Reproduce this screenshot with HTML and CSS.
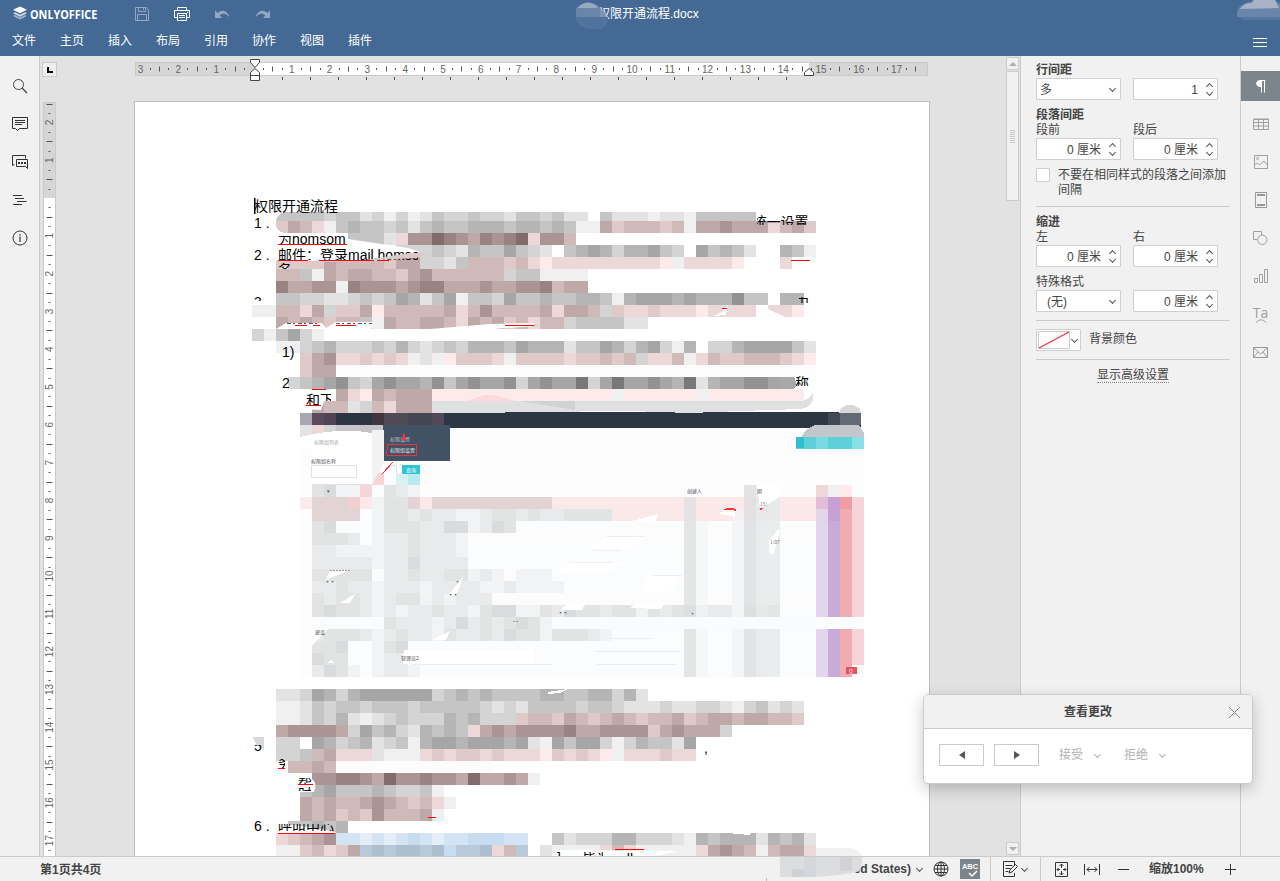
FILE: index.html
```html
<!DOCTYPE html>
<html lang="zh-CN">
<head>
<meta charset="utf-8">
<title>权限开通流程.docx</title>
<link rel="stylesheet" href="styles.css">
</head>
<body>
<div class="app">
  <header class="header">
    <div class="title-row">
      <div class="logo">
        <svg width="16" height="16" viewBox="0 0 16 16"><path d="M1 10l2-1 5 2.4L13 9l2 1-7 3.600z" fill="#9fb4cf"/><path d="M1 7.300l2-1 5 2.400 5-2.400 2 1L8 10.700z" fill="#d3deea"/><path d="M8 .500l7 3.300L8 7.200 1 3.800z" fill="#fff"/></svg>
        <span>ONLYOFFICE</span>
      </div>
      <div class="quick">
        <svg class="dim" width="14" height="14" viewBox="0 0 14 14"><path d="M.500.500h11l2 2v11H.500zM3.500.500v4h7v-4M8.500 1v2M2.500 13V7.500h9V13" fill="none" stroke="#fff"/></svg>
        <svg width="16" height="14" viewBox="0 0 16 14"><path d="M3.500 3.500v-3h9v3M3.500 10.500h-3v-7h15v7h-3M3.500 6.500h9v7h-9zM5 8.500h6M5 10.500h6M13 5.500h1" fill="none" stroke="#fff"/></svg>
        <svg class="dim" width="15" height="9" viewBox="0 0 15 9"><path d="M0 .500v7.500h7L4.500 5.300C8 2.500 12 3.500 14.500 7.500 13 .800 7-1.200 2.600 3z" fill="#fff"/></svg>
        <svg class="dim" width="15" height="9" viewBox="0 0 15 9"><path d="M15 .500v7.500H8l2.500-2.700C7 2.500 3 3.500.500 7.500 2 .800 8-1.200 12.400 3z" fill="#fff"/></svg>
      </div>
      <div class="doc-name">权限开通流程.docx</div>
      <svg class="veil" width="1280" height="56"><g id="headVeil"></g></svg>
    </div>
    <nav class="tabs"><span>文件</span><span>主页</span><span>插入</span><span>布局</span><span>引用</span><span>协作</span><span>视图</span><span>插件</span>
      <svg class="burger" width="14" height="9"><path d="M0 .500h14M0 4.500h14M0 8.500h14" stroke="#fff"/></svg></nav>
  </header>

  <main class="main">
    <aside class="rail left">
      <i><svg width="16" height="16" viewBox="0 0 16 16"><circle cx="6.500" cy="6.500" r="5" fill="none" stroke="#444"/><path d="M10 10l5 5" stroke="#444" stroke-width="1.300"/></svg></i>
      <i><svg width="16" height="16" viewBox="0 0 16 16"><path d="M.500 1.500h15v11h-8l-2 2-2-2h-3z" fill="none" stroke="#333"/><path d="M3 4.500h10M3 6.500h10M3 8.500h7" stroke="#333"/></svg></i>
      <i><svg width="16" height="16" viewBox="0 0 16 16"><path d="M2.500 10.500l-2 1v-10h13v3M4.500 5.500h11v9l-2-2h-9z" fill="none" stroke="#333"/><path d="M6 8h2v2H6zM9 8h2v2H9zM12 8h2v2h-2z" fill="#333"/></svg></i>
      <i><svg width="14" height="12" viewBox="0 0 14 12"><path d="M0 1.500h9M2 4.500h9M4 7.500h9.500M0 10.500h9" stroke="#333"/></svg></i>
      <i><svg width="16" height="16" viewBox="0 0 16 16"><circle cx="8" cy="8" r="7" fill="none" stroke="#333"/><path d="M8 4v1.500M8 6.500V12" stroke="#333" stroke-width="1.200"/></svg></i>
    </aside>

    <section class="editor">
      <svg class="canvas" id="canvas" width="980" height="800" viewBox="40 56 980 800">
        <rect x="134.500" y="101.500" width="795" height="780" fill="#fff" stroke="#bbbec2"/>
        <g id="rulers"></g>
        <g id="mosaic" shape-rendering="crispEdges"></g>
        <g class="doc">
          <rect x="254" y="198" width="1.500" height="16"/>
          <text x="254" y="211">权限开通流程</text>
          <text x="254" y="227.500">1 .</text>
          <text x="254" y="259.500">2 .</text>
          <path d="M276 233h52l20 6 60 9 12 4-40 9H278z" fill="#fff"/>
          <svg x="276" y="236" width="75" height="9" viewBox="276 236 75 9"><text x="278" y="243.500">为homsom</text></svg>
          <svg x="276" y="245" width="142" height="15" viewBox="276 245 142 15"><text x="278" y="259.500">邮件：登录mail.homso</text></svg>
          <path d="M276 270q20-10 60-8l80-4 14-5h-20l-50 8h-84z" fill="#dcc8c7"/>
          <path class="redline" d="M278 244.500h69M278 260.500h30M319 260.500h55M377 260.500h12"/>
          <svg x="278" y="263" width="12" height="6" viewBox="278 263 12 6"><text x="278" y="274">名</text></svg>
          <svg x="757" y="215" width="56" height="10" viewBox="757 215 56 10"><text x="752.500" y="226.500">统一设置</text></svg>
          <path class="redline" d="M791 260.500h19M722 308.500h5"/>
          <svg x="254" y="295" width="8" height="6" viewBox="254 295 8 6"><text x="254" y="307">3</text></svg>
          <svg x="799" y="297" width="10" height="6" viewBox="799 297 10 6"><text x="795" y="307">中</text></svg>
          <path d="M276 329l10-6h36l4 5 10-6h38l-3 7zM430 329l60-5 44-1v3l-40 3z" fill="#fff"/>
          <path class="redline" d="M295 325.500h12M313 325.500h7M336 325.500h20M505 325.500h29"/>
          <path d="M287 323.500h33M336 323.500h36" stroke="#555" stroke-dasharray="4 2 2 3"/>
          <text x="282" y="357">1)</text>
          <svg x="282" y="375" width="7" height="13" viewBox="282 375 7 13"><text x="282" y="388">2)</text></svg>
          <path d="M301 409l8-18 27-1-12 12-3 8z" fill="#fff"/>
          <svg x="306" y="391" width="15" height="14" viewBox="306 391 15 14"><text x="306" y="405">和</text></svg>
          <svg x="320" y="391" width="11" height="10" viewBox="320 391 11 10"><text x="320" y="405">下</text></svg>
          <path class="redline" d="M312 389.500h14M306 405.500h15"/>
          <svg x="796" y="376" width="13" height="10" viewBox="796 376 13 10"><text x="795" y="387.500">称</text></svg>
          <svg x="254" y="745" width="9" height="7" viewBox="254 745 9 7"><text x="254" y="751">5</text></svg>
          <svg x="278" y="759" width="7" height="9" viewBox="278 759 7 9"><text x="278" y="768">务</text></svg>
          <path d="M286 778h24q8 3 4 14h-14z" fill="#fff"/>
          <svg x="298" y="778" width="14" height="6" viewBox="298 778 14 6"><text x="298" y="787">帮</text></svg>
          <svg x="298" y="787" width="13" height="4" viewBox="298 787 13 4"><text x="298" y="799">时</text></svg>
          <path class="redline" d="M278 768.500h7M298 784.500h15M428 817.500h8"/>
          <text x="704" y="753">,</text>
          <text x="254" y="831">6 .</text>
          <path d="M277 833v-10l30 4 20 3 10 3z" fill="#fff"/>
          <svg x="278" y="824" width="57" height="7" viewBox="278 824 57 7"><text x="278" y="832">呼叫中心</text></svg>
          <path class="redline" d="M278 833.500h57"/>
          <path d="M552 856l8-6 118 1-22 5z" fill="#fff"/>
          <text x="557" y="863">]</text><text x="582" y="864">皆为</text><text x="619" y="864">all</text>
          <path class="redline" d="M615 849.500h29"/>
        </g>
      </svg>
      <div class="scroll"><b class="up"></b><div class="thumb"><span></span></div><b class="down"></b></div>
    </section>

    <aside class="panel">
      <div class="lbl bold">行间距</div>
      <div class="pair"><div class="box combo"><span>多</span><em class="dn"></em></div><div class="box spin"><span>1</span><em></em></div></div>
      <div class="lbl bold sec">段落间距</div>
      <div class="pair lbl"><span>段前</span><span>段后</span></div>
      <div class="pair"><div class="box spin"><span>0 厘米</span><em></em></div><div class="box spin"><span>0 厘米</span><em></em></div></div>
      <div class="check"><i></i><span>不要在相同样式的段落之间添加间隔</span></div>
      <hr>
      <div class="lbl bold sec">缩进</div>
      <div class="pair lbl"><span>左</span><span>右</span></div>
      <div class="pair"><div class="box spin"><span>0 厘米</span><em></em></div><div class="box spin"><span>0 厘米</span><em></em></div></div>
      <div class="lbl sec">特殊格式</div>
      <div class="pair"><div class="box combo"><span class="none">(无)</span><em class="dn"></em></div><div class="box spin"><span>0 厘米</span><em></em></div></div>
      <hr>
      <div class="color"><div class="box swatch"><svg width="32" height="18"><path d="M.500.500h31v17H.500z" fill="#fff" stroke="#ccc"/><path d="M1 17L31 1" stroke="#f33" stroke-width="1.300"/></svg><em class="dn"></em></div><span>背景颜色</span></div>
      <hr>
      <div class="more"><span>显示高级设置</span></div>
    </aside>

    <aside class="rail right">
      <i class="on"><svg width="10" height="13" viewBox="0 0 10 13"><path d="M4 .500h5.500M5.500 0v12.500M8.500 0v12.500" stroke="#fff" fill="none"/><path d="M5 0v7C-1.500 7-1.500 0 5 0z" fill="#fff"/></svg></i>
      <i><svg width="16" height="12" viewBox="0 0 16 12"><path d="M.500 1h15v10.500H.500zM0 4.500h16M0 8h16M5.500 1v10M10.500 1v10M0 1.500h16" fill="none" stroke="#a0a0a0"/></svg></i>
      <i><svg width="14" height="14" viewBox="0 0 14 14"><path d="M.500.500h13v13H.500zM.500 10l3-2 2 2 4.500-4 3.500 4" fill="none" stroke="#a0a0a0"/><circle cx="3.500" cy="3.500" r="1" fill="none" stroke="#a0a0a0"/></svg></i>
      <i><svg width="12" height="16" viewBox="0 0 12 16"><path d="M.500.500h11v15H.500z" fill="none" stroke="#999"/><path d="M2 3h8M2 13h8" stroke="#999" stroke-width="2"/></svg></i>
      <i><svg width="15" height="14" viewBox="0 0 15 14"><path d="M4 8.500H.500v-8h8V4" fill="none" stroke="#a0a0a0"/><circle cx="9.300" cy="8.800" r="4.700" fill="none" stroke="#a0a0a0"/></svg></i>
      <i><svg width="14" height="14" viewBox="0 0 14 14"><path d="M.500 9.500h3v4h-3zM5.500 5.500h3v8h-3zM10.500.500h3v13h-3z" fill="none" stroke="#a0a0a0"/></svg></i>
      <i class="ta"><span>Ta</span><svg width="12" height="4"><path d="M.500 4Q6-2.500 11.500 4" fill="none" stroke="#a0a0a0"/></svg></i>
      <i><svg width="15" height="11" viewBox="0 0 15 11"><path d="M.500.500h14v10H.500zM1 1l6.500 6L14 1M1 10l4-5M14 10l-4-5" fill="none" stroke="#999"/></svg></i>
    </aside>
  </main>

  <footer class="status">
    <span class="pages">第1页共4页</span>
    <div class="tools">
      <span class="lang">ed States)</span><em class="dn"></em>
      <svg class="globe" width="16" height="16" viewBox="0 0 16 16"><g fill="none" stroke="#333"><circle cx="8" cy="8" r="7"/><ellipse cx="8" cy="8" rx="3.500" ry="7"/><path d="M8 1v14M1 8h14M2 4.500h12M2 11.500h12"/></g></svg>
      <div class="spell"><span>ABC</span><svg width="12" height="8"><path d="M3 3l3 3 5-5" fill="none" stroke="#fff" stroke-width="1.500"/></svg></div>
      <u></u>
      <svg class="track" width="15" height="16" viewBox="0 0 15 16"><path d="M11.500 4V.500H.500v15h11V12M2.500 4.500h7M2.500 7.500h5M2.500 10.500h3" fill="none" stroke="#333"/><path d="M6 12l1-3 5.500-5.500 2 2L9 11z" fill="#f1f1f1" stroke="#333"/></svg><em class="dn t"></em>
      <u></u>
      <svg class="fit" width="14" height="15" viewBox="0 0 14 15"><path d="M.500.500h12v14H.500zM6.500 2v4M6.500 9v4M2 7.500h3M8 7.500h3M4.500 4l2-2 2 2M4.500 11l2 2 2-2M3.500 6L2 7.500 3.500 9M9.500 6L11 7.500 9.500 9" fill="none" stroke="#333"/></svg>
      <svg class="wide" width="17" height="11" viewBox="0 0 17 11"><path d="M.500 0v11M15.500 0v11M3 5.500h10M5.500 3L3 5.500 5.500 8M10.500 3L13 5.500 10.500 8" fill="none" stroke="#333"/></svg>
      <svg class="minus" width="11" height="11"><path d="M0 5.500h11" stroke="#333"/></svg>
      <span class="zoom">缩放100%</span>
      <svg class="plus" width="11" height="11"><path d="M0 5.500h11M5.500 0v11" stroke="#333"/></svg>
    </div>
    <svg class="blot" width="130" height="33" viewBox="750 848 130 33"><g id="footVeil"></g></svg>
  </footer>
</div>

<div class="dialog">
  <div class="dlg-head"><span>查看更改</span><svg width="11" height="11"><path d="M0 0l11 11M11 0L0 11" stroke="#888"/></svg></div>
  <div class="dlg-body">
    <button><svg width="6" height="8"><path d="M6 0v8L0 4z" fill="#555"/></svg></button>
    <button><svg width="6" height="8"><path d="M0 0v8l6-4z" fill="#555"/></svg></button>
    <span>接受</span><em class="dn"></em><span class="rej">拒绝</span><em class="dn"></em>
  </div>
</div>
<script src="draw.js"></script>
</body>
</html>
```
FILE: styles.css
```css
* { box-sizing: border-box; }
body { margin: 0; width: 1280px; height: 881px; overflow: hidden; position: relative; font: 12px/15px "Liberation Sans", "Noto Sans CJK SC", sans-serif; color: #444; }
svg { display: block; flex: none; }
em, i { font-style: normal; }
.app { height: 881px; display: flex; flex-direction: column; background: #f1f1f1; }

.header { height: 56px; background: #446995; color: #fff; position: relative; }
.title-row { height: 28px; display: flex; align-items: center; padding-left: 12px; }
.logo { display: flex; align-items: center; gap: 2px; width: 123px; font: bold 11.500px "Open Sans", sans-serif; }
.logo span { transform: scaleX(.94); transform-origin: left; }
.quick { display: flex; align-items: center; gap: 25px; width: 135px; }
.dim { opacity: .42; }
.doc-name { margin-left: 328px; width: 130px; font-size: 12px; white-space: nowrap; }
.veil { position: absolute; left: 0; top: 0; }
.tabs { display: flex; gap: 24px; padding: 6px 12px 0; font-size: 12px; }
.burger { margin: 4px 1px 0 auto; }

.main { height: 800px; display: flex; }
.rail { width: 40px; padding-top: 15px; display: flex; flex-direction: column; gap: 8px; background: #f1f1f1; }
.rail i { height: 30px; display: flex; align-items: center; justify-content: center; }
.left { border-right: 1px solid #cbcbcb; }
.right { border-left: 1px solid #cbcbcb; }
.rail .on { background: #7d858c; }
.rail .ta { flex-direction: column; color: #a0a0a0; font: 14px/13px "Open Sans", sans-serif; }

.editor { width: 980px; position: relative; display: flex; justify-content: flex-end; background: #e2e2e2; overflow: hidden; }
.canvas { position: absolute; left: 0; top: 0; }
.doc text { font: 14px "Liberation Sans", "Noto Sans CJK SC", sans-serif; fill: #000; }
.redline { stroke: #f00; fill: none; }
.num { font: 10px "Liberation Sans", sans-serif; fill: #666; text-anchor: middle; }
.scroll { width: 14px; padding: 1px 1px 1px 0; display: flex; flex-direction: column; position: relative; }
.scroll b { width: 13px; height: 13px; border: 1px solid #cbcbcb; display: flex; align-items: center; justify-content: center; background: #f1f1f1; }
.scroll b::after { content: ""; border: 4px solid transparent; }
.up::after { border-top: 0 !important; border-bottom-color: #adadad !important; }
.down::after { border-bottom: 0 !important; border-top-color: #adadad !important; }
.scroll .down { margin-top: auto; }
.thumb { width: 13px; height: 130px; margin-top: 1px; border: 1px solid #cbcbcb; background: #f1f1f1; display: flex; align-items: center; justify-content: center; }
.thumb span { width: 5px; height: 13px; background: repeating-linear-gradient(#cbcbcb 0 1px, #f1f1f1 1px 2px); }

.panel { width: 220px; border-left: 1px solid #cbcbcb; padding: 7px 10px 0 15px; }
.lbl { height: 15px; white-space: nowrap; }
.bold { font-weight: bold; }
.sec { margin-top: 8px; }
.pair { display: grid; grid-template-columns: 85px 85px; column-gap: 12px; }
.box { height: 22px; border: 1px solid #cfcfcf; border-radius: 1px; background: #fff; display: flex; align-items: center; }
.box > span { padding-top: 2px; }
.combo { justify-content: space-between; padding: 0 4px 0 3px; }
.combo .none { padding-left: 7px; }
.spin { justify-content: flex-end; padding-right: 4px; gap: 7px; }
.dn { width: 7px; height: 6px; display: inline-flex; flex: none; }
.dn::after, .spin em::before, .spin em::after { content: ""; width: 4px; height: 4px; margin: 0 auto; border: solid #555; border-width: 0 1.300px 1.300px 0; transform: rotate(45deg); }
.spin em { width: 8px; height: 16px; display: flex; flex-direction: column; justify-content: space-between; }
.spin em::before { transform: rotate(225deg); margin-top: 3px; }
.spin em::after { margin-bottom: 2px; }
.check { margin-top: 8px; display: flex; gap: 8px; line-height: 15px; }
.check i { width: 14px; height: 14px; border: 1px solid #cfcfcf; background: #fff; flex: none; border-radius: 1px; }
.check span { width: 170px; }
hr { border: 0; height: 1px; background: #cbcbcb; margin: 8px 0 0; }
.color { margin-top: 8px; display: flex; gap: 8px; }
.color > span { line-height: 20px; }
.swatch { width: 45px; padding-left: 1px; gap: 1px; }
.more { margin-top: 8px; text-align: center; }
.more span { border-bottom: 1px dotted #888; }

.status { height: 25px; border-top: 1px solid #cbcbcb; display: flex; align-items: center; padding-left: 40px; font-weight: bold; position: relative; }
.pages { padding-top: 2px; }
.tools { margin-left: auto; display: flex; align-items: center; padding-right: 44px; }
.lang { margin-right: 5px; }
.globe { margin-left: 10px; }
.spell { margin: 0 10px 0 11px; width: 20px; height: 20px; background: #7d858c; color: #fff; font: bold 7.500px/9px "Liberation Sans", sans-serif; display: flex; flex-direction: column; align-items: center; padding-top: 3px; }
.spell svg { margin: -1px 0 0 4px; }
.tools u { width: 1px; height: 24px; background: #cbcbcb; }
.track { margin-left: 12px; margin-right: 3px; }
.t { margin-right: 12px; }
.fit { margin-left: 14px; }
.wide { margin-left: 15px; }
.minus { margin-left: 17px; }
.zoom { width: 56px; margin: 0 20px; white-space: nowrap; }
.blot { position: absolute; left: 750px; top: -9px; }

.dialog { position: absolute; left: 923px; top: 694px; width: 330px; height: 90px; border: 1px solid #cbcbcb; border-radius: 5px; background: #fff; box-shadow: 0 5px 15px rgba(0,0,0,.22); overflow: hidden; }
.dlg-head { height: 34px; background: #f1f1f1; border-bottom: 1px solid #cbcbcb; display: flex; align-items: center; font-weight: bold; padding: 2px 12px 0 140px; justify-content: space-between; }
.dlg-body { display: flex; align-items: center; padding: 15px 15px 0; color: #b0b0b0; }
.dlg-body button { width: 45px; height: 22px; border: 1px solid #cbcbcb; background: #fff; margin: 0 10px 0 0; padding: 0; display: flex; align-items: center; justify-content: center; }
.dlg-body span { margin: 0 11px 0 10px; }
.dlg-body .rej { margin-left: 23px; }
.dlg-body .dn::after { border-color: #b0b0b0; }
```
FILE: draw.js
```js
const tones = {
  o: '#fcfcfd', a: '#f0f0f0', b: '#e3e3e3', c: '#d4d4d4', d: '#c5c5c5', e: '#b5b5b5', f: '#a6a6a6', g: '#929292', h: '#787878',
  p: '#fdeaea', q: '#ecd8d8', r: '#dfcac9', s: '#cfbab9', t: '#bea9a8', u: '#aa9594', v: '#998382', w: '#826b6b',
  i: '#e5eef8', j: '#d5e4f4', k: '#c7dcf1', l: '#b8c9d9', m: '#adbfcf', n: '#f6d5d8',
  x: '#e3d5eb', y: '#c9abd8', z: '#f2abb1', P: '#fbe9ea', Q: '#e2d4d5', R: '#f3cfd1', Y: '#c7a1d3', Z: '#f29da3', X: '#e4bdd8',
  A: '#f1f3f4', B: '#e9eaeb', C: '#e2e3e3', D: '#dadbdc', O: '#fafcfe', W: '#fff',
  '1': '#a5a7b1', '2': '#5a4a5a', '3': '#504353', '4': '#2c3643', '5': '#40353f', '6': '#605b6a', '7': '#56454f', '8': '#3e4955'
};
const rep = (s, n) => s.repeat(n);
// Each entry: top, left, cell tones, optional cell height.
const rows = [
  [212, 276, 'ddddcddbcacabdccdccbddcdbb.dbbbabbaddddd', 9],
  [221, 276, 'rtsqadeddcdbdeddeeedeededaatrsssrsattutttqstr'],
  [233, 348, 'dddbquuwvutvuvwquus'],
  [245, 396, 'cccdcbeddfdcb.defeceefdc.fdedb..eda'],
  [257, 288, 'rrrtssssrttccbdsssrsqpqqqqqqqqqpaqqqqp'],
  [257, 780, 'q'],
  [269, 276, 'ssdatsttssrtusssssscddaaaa'],
  [281, 276, 'vttuuavuuutuvvtttuttuuvstt'],
  [293, 276, 'ddccbbcdcdfebdfaddcfddeddeedaefffefeeegdd.ee'],
  [305, 252, 'aassqtcrrtpssssstqsusssstqttscrqqrqqqpqqqq.qqp'],
  [317, 276, 'tstsrssdatssttsqtstrsqsscddddbb'],
  [329, 252, 'cadfca'],
  [341, 276, 'aacdecccdcecbcdceeedfeeebddfecefcae.cceffffdb'],
  [353, 300, 'rtuqqrqrqabaprrrqarrrrqrrsrscqqsaqsrrsssrqp'],
  [365, 300, 'rtt' + rep('o', 40)],
  [377, 288, 'cdefgdcfgffegdfgffgcfgffhcfhffgfehbeffggff'],
  [389, 336, 'tqptsttt' + rep('p', 15) + 'a' + rep('p', 6) + 'a' + rep('p', 8)],
  [401, 312, 'tssbcsqttt'],
  [473, 372, 'nOOA'],
  [485, 312, 'CDAAnOCBAo'],
  [485, 816, 'qap'],
  [497, 300, 'pQQQRPACCQPQ' + rep('Q', 9) + rep('P', 22) + 'XYZn'],
  [509, 312, 'QQQQOACCBCBBAABCCBCBBCCCC' + rep('P', 17) + 'xYzn'],
  [521, 312, 'CDOOOACCCBBDDABDC' + rep('O', 25) + 'xyzn'],
  [533, 312, 'CCCBOABBCBBBA' + rep('o', 29) + 'xyzn'],
  [545, 312, 'BBAAAABBCBBBA' + rep('O', 29) + 'xyzn'],
  [557, 312, 'BBBBBABBDBBBBO' + rep('O', 28) + 'xyzn'],
  [569, 312, 'CCCCCOBBCBBCCABAoAAAO' + rep('O', 21) + 'xyzn'],
  [581, 312, 'BBCBBABBBABBBBAABAAAA' + rep('O', 21) + 'xyzn'],
  [593, 312, 'CBCCBABCCABABBB' + rep('o', 27) + 'xyzn'],
  [605, 312, 'CDCCBABABBCBBACDDAACBDCCBCCACBCDDBBOBBDOOO' + 'xyzn'],
  [617, 312, rep('O', 6) + 'CBBBABDBCBCDCAO' + rep('O', 25)],
  [629, 312, 'BCCCBABCBBACBBCBDCCACCCBA' + rep('O', 17) + 'xyzn'],
  [641, 312, 'CCDOOACD' + rep('O', 34) + 'xyzn'],
  [653, 312, 'DCCOOABB' + rep('O', 34) + 'xyzn'],
  [665, 312, 'BDCAOABBA' + rep('O', 33) + 'xyz'],
  [413, 300, '1234445667888', 12],
  [425, 300, 'bqcdddd'],
  [689, 276, 'bbcfeceffffffcdededdddeeddeeceb'],
  [701, 276, 'aabdcddcdddcdddddcbcbddddcddcbbbcbbccbacdbcb'],
  [713, 276, 'aabdcebabcdcccedecccrssrtsrstsrsstrsttsttssr'],
  [725, 276, 'tuuuutcfdecbededqtutuuuuvttuuuurtutttc'],
  [737, 264, '.cc.fecdebcdaeffefffefbafdffcaceddbf'],
  [749, 276, 'ccdstqqqbaaaqrqrrqrqqqprqrqpaqqqrqq'],
  [761, 288, 'ssts' + rep('o', 13)],
  [773, 312, 'uuvvutwuuvuutwttuta'],
  [785, 300, 'defdddedccda'],
  [797, 300, 'tstsstutsrsqa'],
  [809, 300, 'tstrsrusssta'],
  [821, 276, 'oddede'],
  [833, 276, 'qrstujjijijkjijjkkkjj..dbccceecccbaedeeebedeb'],
  [845, 276, 'aarsqrtlmlmmlmkllmqsl.baaaaqsqaaaaaqtutsasttq']
];
const cells = list => list.map(([y, x, s, h]) => [...s].map((c, k) =>
  tones[c] ? `<rect x="${x + k * 12}" y="${y}" width="12" height="${h || 12}" fill="${tones[c]}"/>` : '').join('')).join('');
const poly = (d, fill) => `<path d="${d}" fill="${fill}"/>`;
const mini = (x, y, t, fill) => `<text x="${x}" y="${y}" style="font:5px 'Noto Sans CJK SC'" fill="${fill || '#555'}">${t}</text>`;

document.getElementById('mosaic').innerHTML =
  '<rect x="300" y="408" width="564" height="270" fill="#fdfdfe"/>' + cells(rows) +
  // application bar and dropdown of the embedded figure
  '<rect x="444" y="412" width="417" height="16" fill="#2b3743"/><rect x="383" y="425" width="67" height="36" fill="#435165"/>' +
  '<rect x="384" y="413" width="60" height="12" fill="#514955"/><rect x="408" y="413" width="24" height="12" fill="#444653"/>' +
  poly('M432 401h370q9-2 11-9q2 14-11 17l-62 2-50 2-60-2-100 1-50 1-48 0z', '#dfe0e2') +
  poly('M466 401l18-6 10 0 22 6z', '#fcdada') + poly('M520 401h55v9z', '#d0d2d4') +
  poly('M780 377h14l3 8-4 4h-13z', '#a8a8a8') +
  poly('M801 439q2-9 14-14h44l5 8v4z', '#c3c7cb') +
  '<rect x="828" y="413" width="12" height="12" fill="#414952"/><rect x="840" y="413" width="21" height="12" fill="#646a73"/>' + poly('M839 413q2-8 11-8t11 8z', '#d7d8d9') +
  '<rect x="796" y="437" width="68" height="12" fill="#5ed0db"/><rect x="796" y="437" width="8" height="11" fill="#31c0cf"/><rect x="816" y="437" width="12" height="12" fill="#79dae1"/><rect x="852" y="437" width="12" height="12" fill="#88dfe5"/>' +
  poly('M300 437q40-10 72-4v64h-60v-49h-12z', '#fff') + poly('M372 430h12v32l-12 23z', '#f0f2f3') +
  '<path d="M311.500 465.500h45v12h-45zM312 484.500h60M388 465.500h8v12" fill="none" stroke="#dfe3ec"/>' +
  mini(314, 444, '权限组列表', '#aaa') + mini(311, 463, '权限组名称') + mini(390, 441, '权限设置', '#b5bfca') + mini(390, 452, '权限组设置', '#e2e7ec') +
  '<path d="M387.500 444.500h29v11h-30zM393 462l-11 12" fill="none" stroke="#e3363f"/>' + poly('M404 432l-2 8h4z', '#f33') +
  '<rect x="402" y="465" width="18" height="10" fill="#31c5d4"/><rect x="396" y="474" width="12" height="11" fill="#d6f3f2"/><rect x="408" y="474" width="12" height="11" fill="#b9eaee"/>' + mini(406, 472, '查询', '#fff') +
  cells([[485, 312, 'CDAAn'], [497, 312, 'QQQR']]) + mini(327, 493, '▾') +
  // tall columns
  '<g opacity=".8"><rect x="684" y="497" width="12" height="180" fill="#dfe1e1"/><rect x="696" y="521" width="12" height="156" fill="#f4f6f7"/><rect x="732" y="509" width="12" height="168" fill="#f2f4f6"/><rect x="744" y="485" width="36" height="192" fill="#e6e8e9"/><rect x="744" y="485" width="12" height="192" fill="#dcdede"/></g>' +
  poly('M757 485h23v12l-20 12z', '#fff') + mini(687, 493, '创建人') + mini(757, 493, '期') + mini(760, 506, '15:', '#777') +
  poly('M724 509q6-2 12 0v2l-12-1zM760 508h3l-1 2h-2z', '#f33') + poly('M718 513q14-4 17-2v6z', '#fff') +
  poly('M778 529l-9 12v10l4 5 7-25z', '#fff') + mini(770, 544, '1:07', '#777') +
  poly('M632 521l26-7-3 9zM587 549l20-12h38l-18 12zM558 573l14-10h52l-16 9zM640 593l10-20h30l-8 18zM560 610l8-7h18l-4 7zM630 608l6-5h28l-3 6z', '#fff') +
  '<path d="M606 536.500h38M570 562.500h42M652 575.500h30M592 550.500h30M604 638.500h48M594 651.500h86M597 664.500h80M412 664.500h140" stroke="#ebeef5"/>' +
  poly('M326 580l4-10h20zM340 603l16-10-6 10zM448 596l16-21-7 18zM432 640l18-9-4 9zM312 645v-16h16zM403 657l1-7h130v14H403zM328 663l3-4 3 4z', '#fff') +
  mini(325, 583, '▪▪') + mini(455, 583, '▪') + mini(448, 596, '▪▪') + mini(315, 634, '建设') + mini(401, 660, '管理员2') + mini(558, 614, '▪▪') + mini(690, 615, '▪') +
  '<path d="M330 570.500h20M513 621.500h6" stroke="#999" stroke-dasharray="2 1"/>' +
  '<rect x="846" y="667" width="11" height="7" fill="#e8525e"/>' + mini(849, 673, 'Q', '#fff') +
  '<rect x="552" y="617" width="264" height="12" fill="#fafbfe"/>' +
  poly('M548 692l20-3-8 4-12 1z', '#fff') +
  poly('M253 737h11v12q-9-2-11-12z', '#d8d8d8') +
  poly('M728 833h24l-3 2z', '#fff') + poly('M714 316l8-4 6-8-2 11z', '#fff') + poly('M765 317l3-8 17 8z', '#fff') +
  poly('M276 212h8q-8 3-8 10z', '#fff') + poly('M276 224q0 9 12 9h-12z', '#fff');

// rulers
let r = '<rect x="135.500" y="62.500" width="792" height="13" fill="#d6d6d6" stroke="#cbcbcb"/><rect x="255" y="63" width="554" height="12" fill="#fff"/>' +
  '<rect x="43.500" y="102.500" width="12" height="790" fill="#d6d6d6" stroke="#cbcbcb"/><rect x="44" y="198" width="11" height="690" fill="#fff"/>' +
  '<rect x="42.500" y="62.500" width="14" height="14" fill="#eee" stroke="#cbcbcb"/><path d="M48 67v5h5" fill="none" stroke="#000" stroke-width="2"/>';
for (let q = -12; q <= 70; q++) {
  const x = 254.500 + q * 9.450;
  if (!q || x > 921) continue;
  if (q % 4 === 0) r += `<text class="num" x="${x - .500}" y="72.500">${Math.abs(q / 4)}</text>`;
  else { const h = q % 2 ? 1 : 2.500; r += `<path d="M${Math.round(x) - .500} ${69 - h}v${h * 2}" stroke="#555"/>`; }
}
for (let q = -10; q <= 69; q++) {
  const y = 198 + q * 9.450;
  if (!q) continue;
  if (q % 4 === 0) r += `<text class="num" transform="translate(53 ${y}) rotate(-90)">${Math.abs(q / 4)}</text>`;
  else { const h = q % 2 ? 1 : 3; r += `<path d="M${49.500 - h} ${Math.round(y) + .500}h${h * 2}" stroke="#555"/>`; }
}
for (let k = 1; k < 20; k++) r += `<path d="M${Math.round(254.500 + k * 28) - .500} 77v3" stroke="#555"/>`;
r += '<path d="M250.500 59.500h9v3l-4.500 5-4.500-5zM250.500 80.500h9v-8l-4.500-4-4.500 4zM250.500 75.500h9M804.500 75.500h9v-3l-4.500-4-4.500 4z" fill="#fff" stroke="#444"/>';
document.getElementById('rulers').innerHTML = r;

document.getElementById('headVeil').innerHTML =
  '<path d="M576 17h32q0 8-6 12h-14q-9-3-12-8z" fill="#50739d"/><path d="M576 17V9q10-11 23-3l5 11z" fill="#6986aa"/><path d="M577 8q10-10 20-2v2z" fill="#98a9bf"/><path d="M600 9q5 2 7 8h-7z" fill="#7d95b5"/>' +
  '<path d="M1237 17q-1-13 13-15l3-2h22l5 4v13z" fill="#6986aa"/><path d="M1240 9q5-7 12-6l2-3h21l4 8z" fill="#a7b3c4"/><path d="M1240 17h40v3h-38z" fill="#54769f"/>';
document.getElementById('footVeil').innerHTML =
  '<path d="M816 856v-8h36q9 3 10 8zM756 857h104v11l-50 10h-54z" fill="#f1f1f1"/><path d="M780 857h82v6q0 7-6 9-10 3-42 5h-34z" fill="#dcdddf"/><path d="M804 857h12v20h-12z" fill="#d4d8dc"/><path d="M792 869h12v8h-12zM840 857h12v14h-12z" fill="#d2d2d4"/><path d="M766.500 878v3" stroke="#bbb"/>';
```
